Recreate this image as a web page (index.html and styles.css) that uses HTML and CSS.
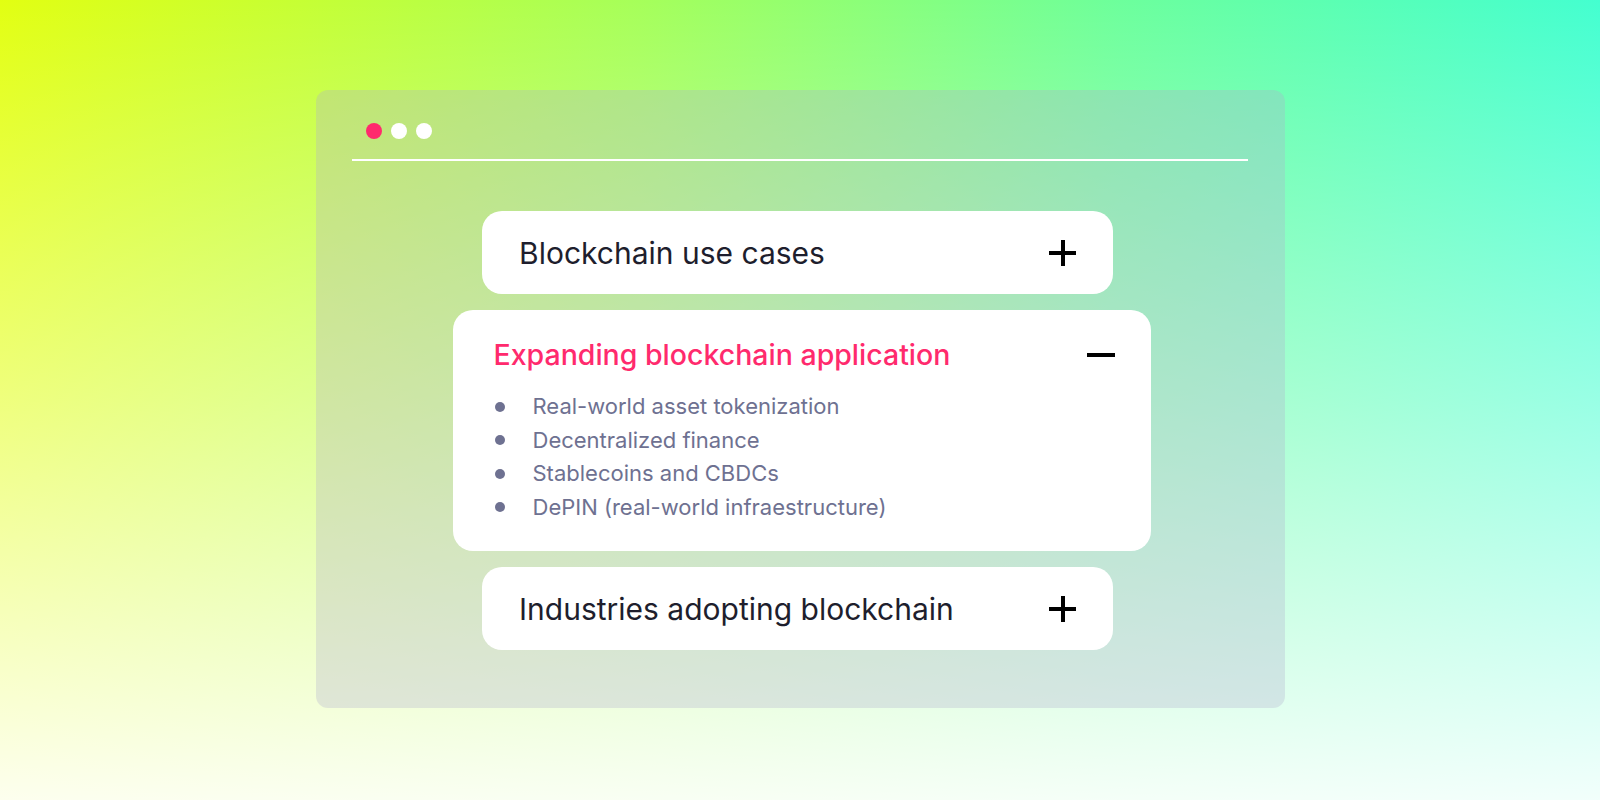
FILE: index.html
```html
<!DOCTYPE html>
<html lang="en">
<head>
    <meta charset="UTF-8">
    <meta name="viewport" content="width=device-width, initial-scale=1.0">
    <title>Blockchain FAQ</title>
    <link rel="stylesheet" href="styles.css">
</head>
<body>
    <div class="window">
        <div class="window-bar">
            <span class="dot dot-active"></span>
            <span class="dot"></span>
            <span class="dot"></span>
        </div>
        <div class="window-rule"></div>

        <div class="accordion">
            <div class="acc-item">
                <h2 class="acc-title">Blockchain use cases</h2>
                <span class="acc-icon plus"></span>
            </div>

            <div class="acc-item open">
                <div class="acc-head">
                    <h2 class="acc-title">Expanding blockchain application</h2>
                    <span class="acc-icon minus"></span>
                </div>
                <ul class="acc-list">
                    <li>Real-world asset tokenization</li>
                    <li>Decentralized finance</li>
                    <li>Stablecoins and CBDCs</li>
                    <li>DePIN (real-world infraestructure)</li>
                </ul>
            </div>

            <div class="acc-item">
                <h2 class="acc-title">Industries adopting blockchain</h2>
                <span class="acc-icon plus"></span>
            </div>
        </div>
    </div>
</body>
</html>
```

FILE: styles.css
```css
:root {
    --pink: #ff2a6d;
    --title: #1e1e2d;
    --muted: #6e7191;
}

* {
    box-sizing: border-box;
    margin: 0;
    padding: 0;
}

body {
    font-family: Inter, 'Noto Sans', sans-serif;
    height: 800px;
    overflow: hidden;
    display: flex;
    justify-content: center;
    padding-top: 90px;
    background:
        linear-gradient(to bottom, rgba(255,255,255,0) 0%, rgba(255,255,255,0.45) 50%, rgba(255,255,255,0.93) 100%),
        linear-gradient(to right, #e2ff12 0%, #a6ff5a 40%, #6dff9c 70%, #44ffd0 100%);
}

.window {
    width: 969px;
    height: 618px;
    padding: 33px 37px 0 36px;
    border-radius: 12px;
    background-color: rgba(175, 172, 205, 0.3);
}

.window-bar {
    display: flex;
    gap: 9px;
    padding-left: 14px;
}

.dot {
    width: 16px;
    height: 16px;
    border-radius: 50%;
    background-color: #fff;
}

.dot-active {
    background-color: var(--pink);
}

.window-rule {
    height: 2px;
    margin-top: 20px;
    background-color: #fff;
}

.accordion {
    display: flex;
    flex-direction: column;
    align-items: center;
    gap: 16px;
    margin-top: 50px;
}

.acc-item {
    width: 631px;
    height: 83px;
    margin-right: 4px;
    background-color: #fff;
    border-radius: 20px;
    display: flex;
    align-items: center;
    justify-content: space-between;
    padding: 0 37px 0 37px;
}

.acc-item.open {
    width: 698px;
    height: 241px;
    margin-right: 0;
    margin-left: 4px;
    display: block;
    padding: 27px 36px 0 41px;
}

.acc-head {
    display: flex;
    align-items: center;
    justify-content: space-between;
}

.acc-title {
    font-size: 30px;
    font-weight: 400;
    color: var(--title);
}

.open .acc-title {
    font-size: 28.5px;
    font-weight: 500;
    color: var(--pink);
}

.acc-icon {
    position: relative;
    width: 27px;
    height: 26px;
}

.acc-icon::before,
.acc-icon::after {
    content: '';
    position: absolute;
    background-color: #000;
}

.acc-icon::before {
    left: 0;
    right: 0;
    top: 11px;
    height: 4px;
}

.plus::after {
    top: 0;
    bottom: 0;
    left: 11.5px;
    width: 4px;
}

.minus {
    width: 28px;
}

.minus::after {
    display: none;
}

.acc-list {
    list-style: none;
    margin-top: 18px;
}

.acc-list li {
    display: flex;
    align-items: center;
    gap: 28px;
    font-size: 22px;
    line-height: 33.5px;
    color: var(--muted);
}

.acc-list li::before {
    content: '';
    width: 10px;
    height: 10px;
    margin-left: 1px;
    border-radius: 50%;
    background-color: var(--muted);
}
```
